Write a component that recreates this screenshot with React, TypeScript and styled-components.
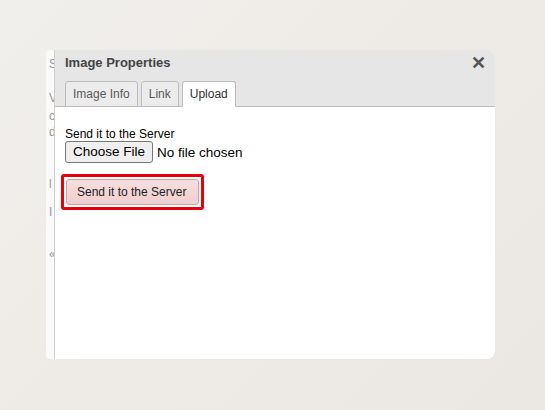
import React from "react";
import styled, { createGlobalStyle } from "styled-components";

const Global = createGlobalStyle`
  html, body { margin: 0; height: 100%; }
  body {
    background: linear-gradient(135deg, #f1efec 0%, #ebe7e1 100%);
    font-family: "Liberation Sans", Arial, sans-serif;
  }
`;

const Stage = styled.div`
  display: flex;
  padding: 50px 0 0 46px;
  height: 410px;
  box-sizing: border-box;
`;

const PageEdge = styled.div`
  width: 8px;
  height: 309px;
  background: #fafafa;
  border-right: 1px solid #cfcfcf;
  border-radius: 4px 0 0 4px;
  overflow: hidden;
  display: flex;
  flex-direction: column;
  font-size: 12px;
  color: #999;
`;

const EdgeGlyph = styled.span<{ $top: number }>`
  margin-top: ${(p) => p.$top}px;
  margin-left: 3px;
  line-height: 12px;
`;

const Dialog = styled.div`
  width: 440px;
  height: 309px;
  background: #fff;
  border-radius: 0 8px 8px 0;
  overflow: hidden;
  display: flex;
  flex-direction: column;
`;

const Header = styled.div`
  background: #e6e6e6;
  border-bottom: 1px solid #bcbcbc;
  padding: 6px 10px 0 10px;
  position: relative;
`;

const Title = styled.div`
  font-size: 13px;
  font-weight: bold;
  color: #444;
  line-height: 13px;
  height: 25px;
`;

const Close = styled.span`
  position: absolute;
  right: 9px;
  top: 5px;
  font-size: 18px;
  font-weight: bold;
  color: #555;
  line-height: 16px;
`;

const Tabs = styled.div`
  display: flex;
  gap: 3px;
  margin-bottom: -1px;
`;

const Tab = styled.div<{ $active?: boolean }>`
  padding: 0 7px;
  height: 24px;
  line-height: 24px;
  font-size: 12px;
  color: ${(p) => (p.$active ? "#333" : "#595959")};
  background: ${(p) => (p.$active ? "#fff" : "#ececec")};
  border: 1px solid #bcbcbc;
  border-bottom-color: ${(p) => (p.$active ? "#fff" : "#bcbcbc")};
  border-radius: 3px 3px 0 0;
`;

const Body = styled.div`
  padding: 21px 10px;
  font-size: 12px;
  color: #000;
`;

const Label = styled.div`
  line-height: 13px;
`;

const FileRow = styled.div`
  display: flex;
  align-items: center;
  gap: 4px;
  font-size: 13.5px;
`;

const FileButton = styled.span`
  border: 1px solid #777;
  border-radius: 3px;
  background: #efefef;
  padding: 1px 7px;
  height: 18px;
  line-height: 18px;
`;

const Highlight = styled.div`
  margin-top: 11px;
  display: inline-block;
  border: 3px solid #e8000a;
  border-radius: 3px;
  padding: 2px;
  margin-left: -4px;
`;

const SendButton = styled.div`
  background: linear-gradient(#f7dede, #efcfcf);
  border: 1px solid #c7a4a4;
  border-radius: 3px;
  padding: 0 12px 0 10px;
  height: 24px;
  line-height: 24px;
  font-size: 12px;
  color: #222;
`;

export default function App() {
  return (
    <>
      <Global />
      <Stage>
        <PageEdge>
          <EdgeGlyph $top={8}>S</EdgeGlyph>
          <EdgeGlyph $top={22}>V</EdgeGlyph>
          <EdgeGlyph $top={6}>c</EdgeGlyph>
          <EdgeGlyph $top={4}>d</EdgeGlyph>
          <EdgeGlyph $top={40}>l</EdgeGlyph>
          <EdgeGlyph $top={16}>I</EdgeGlyph>
          <EdgeGlyph $top={30}>«</EdgeGlyph>
        </PageEdge>
        <Dialog>
          <Header>
            <Title>Image Properties</Title>
            <Close>✕</Close>
            <Tabs>
              <Tab>Image Info</Tab>
              <Tab>Link</Tab>
              <Tab $active>Upload</Tab>
            </Tabs>
          </Header>
          <Body>
            <Label>Send it to the Server</Label>
            <FileRow>
              <FileButton>Choose File</FileButton>
              <span>No file chosen</span>
            </FileRow>
            <Highlight>
              <SendButton>Send it to the Server</SendButton>
            </Highlight>
          </Body>
        </Dialog>
      </Stage>
    </>
  );
}
